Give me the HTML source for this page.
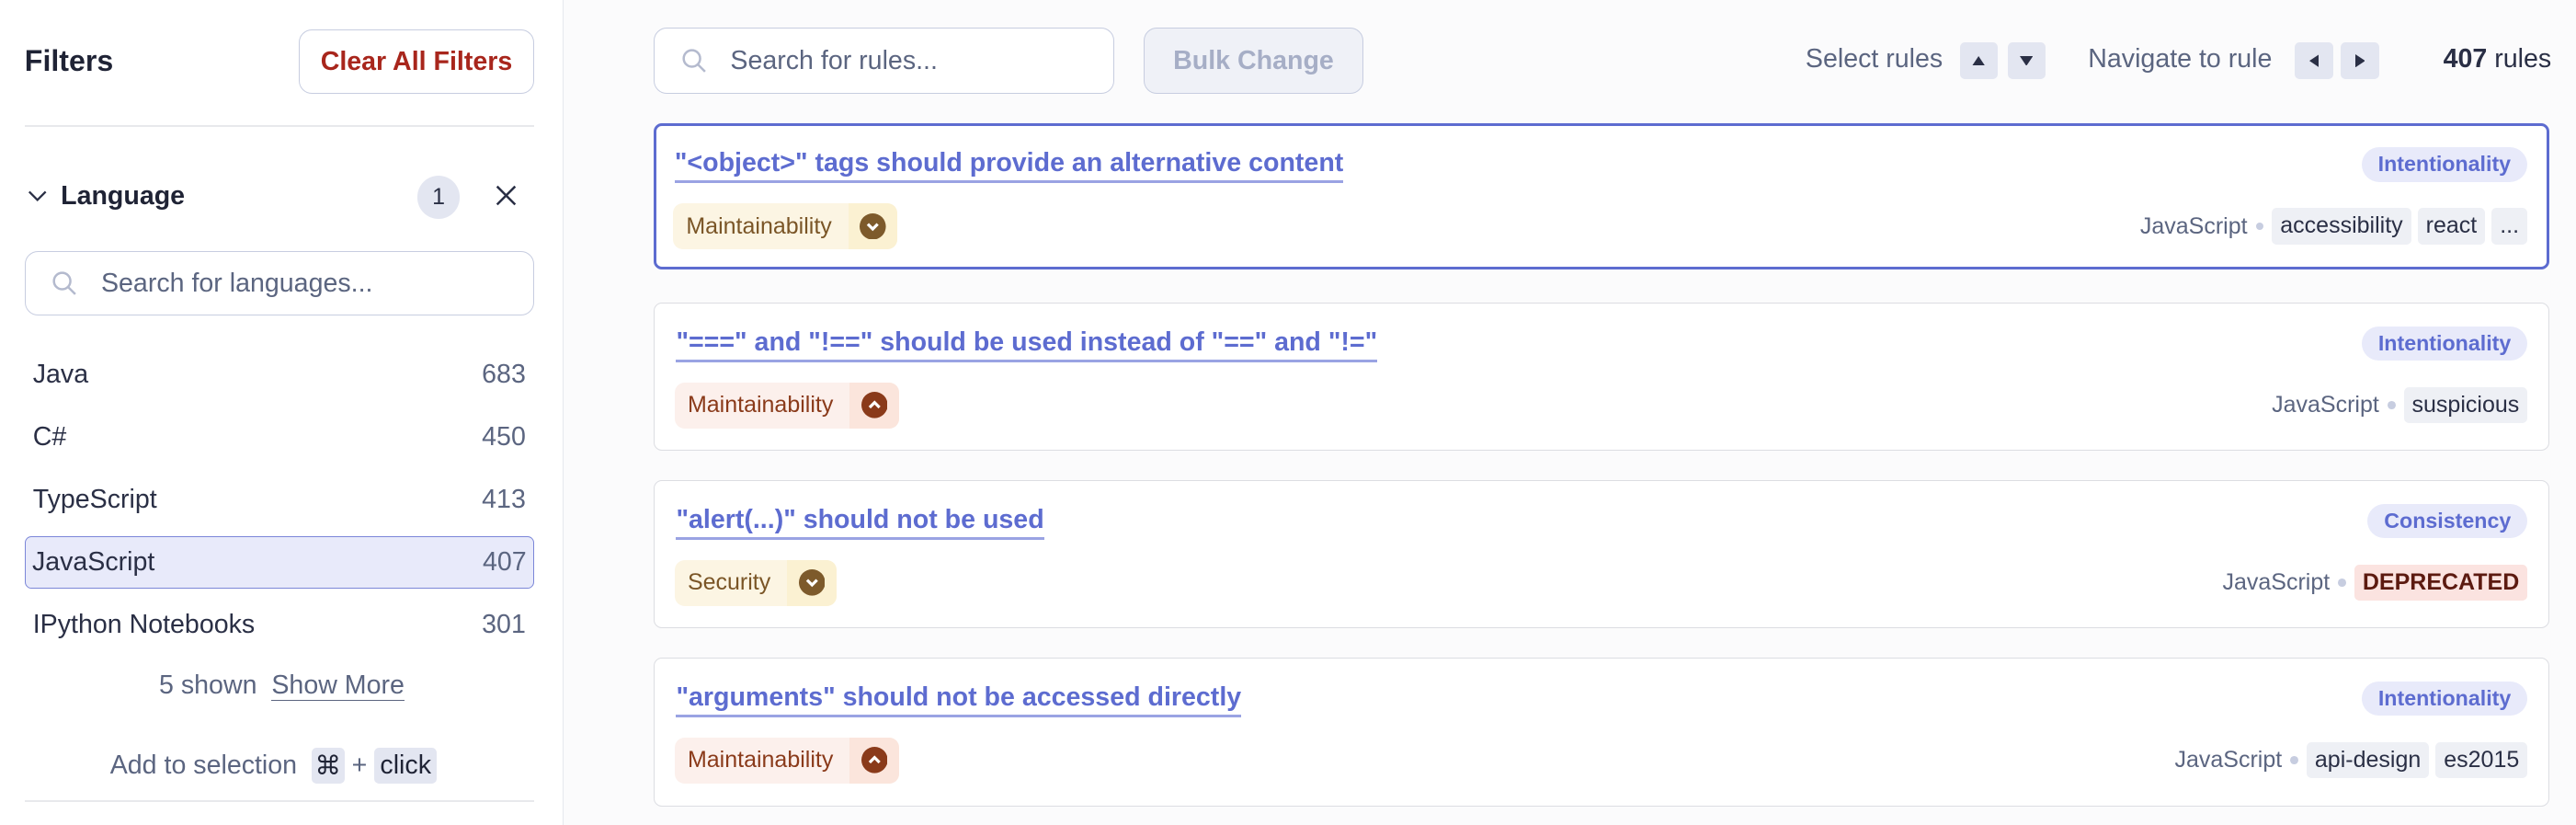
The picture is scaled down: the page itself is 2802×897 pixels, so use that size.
<!DOCTYPE html>
<html><head><meta charset="utf-8"><style>
*{box-sizing:border-box;margin:0;padding:0}
html,body{width:2802px;height:897px;overflow:hidden;background:#fbfbfc}
#z{zoom:1.787;width:1568px;height:502px;position:relative;font-family:"Liberation Sans",sans-serif;color:#2a2f45}
.a{position:absolute}
#side{left:0;top:0;width:343px;height:502px;background:#fff;border-right:1px solid #e6e8ee}
.btn{border:1px solid #c7cde0;border-radius:8px;display:flex;align-items:center;justify-content:center;font-weight:bold;font-size:16px}
.inp{border:1px solid #c7cde0;border-radius:8px;background:#fff;display:flex;align-items:center;font-size:16px;color:#5b6580}
.inp svg{margin:0 14px 0 16px}
.row{left:15px;width:310px;height:32px;display:flex;justify-content:space-between;align-items:center;padding:0 5px;font-size:16px}
.row span:last-child{color:#5b6580}
.card{left:398px;width:1154px;background:#fff;border:1px solid #dcdde2;border-radius:5px}
.title{left:13px;top:14px;font-size:16px;font-weight:bold;color:#5d6cd0;border-bottom:2px solid #9aa3e3;line-height:20px}
.pill{left:12px;top:48px;height:28px;border-radius:6px;display:flex;font-size:14px}
.pill .t{padding:0 10px 0 8px;display:flex;align-items:center}
.pill .i{width:30px;display:flex;align-items:center;justify-content:center;border-radius:0 6px 6px 0}
.med{background:#fcf5e3;color:#7a5526}.med .i{background:#fbf1d2}
.high{background:#fcf0ec;color:#8a3a1a}.high .i{background:#fbe5dc}
.attr{right:13px;top:14px;height:21px;border-radius:11px;background:#e8eafa;color:#5d6cd0;font-weight:bold;font-size:13px;padding:0 10px;line-height:21px}
.meta{right:13px;top:51px;display:flex;align-items:center;font-size:14px;color:#5b6580;height:22px}
.meta .d{width:5px;height:5px;border-radius:50%;background:#c7cde0;margin:0 5px}
.tag{background:#eef0f5;color:#2a2f45;padding:0 5px;height:22px;line-height:22px;border-radius:3px;margin-left:4px}
.kb{background:#e3e6f1;border-radius:3px;width:23px;height:22px;display:flex;align-items:center;justify-content:center}
</style></head><body><div id="z">
<div id="side" class="a">
<div class="a" style="left:15px;top:27px;font-size:18px;font-weight:bold;color:#1f2335">Filters</div>
<div class="a btn" style="left:182px;top:18px;width:143px;height:39px;color:#a8261c">Clear All Filters</div>
<div class="a" style="left:15px;top:76px;width:310px;height:1px;background:#e8e9ec"></div>
<svg class="a" style="left:17px;top:114px" width="12" height="10" viewBox="0 0 12 10"><path d="M1 2.5l5 5 5-5" fill="none" stroke="#2a2f45" stroke-width="1.3"/></svg>
<div class="a" style="left:37px;top:110px;font-size:16px;font-weight:bold;color:#1f2335">Language</div>
<div class="a" style="left:254px;top:107px;width:26px;height:26px;border-radius:13px;background:#e3e6f1;font-size:14px;display:flex;align-items:center;justify-content:center">1</div>
<svg class="a" style="left:301px;top:112px" width="14" height="14" viewBox="0 0 14 14"><path d="M1.5 1.5l11 11M12.5 1.5l-11 11" stroke="#2a2f45" stroke-width="1.4"/></svg>
<div class="a inp" style="left:15px;top:153px;width:310px;height:39px"><svg width="16" height="16" viewBox="0 0 16 16"><circle cx="6.5" cy="6.5" r="5" fill="none" stroke="#b4bace" stroke-width="1.4"/><path d="M10 10l4.5 4.5" stroke="#b4bace" stroke-width="1.4"/></svg>Search for languages...</div>
<div class="a row" style="top:212px"><span>Java</span><span>683</span></div>
<div class="a row" style="top:250px"><span>C#</span><span>450</span></div>
<div class="a row" style="top:288px"><span>TypeScript</span><span>413</span></div>
<div class="a row" style="top:326px;background:#e8eafa;border:1px solid #7b86d8;border-radius:4px;padding:0 4px"><span>JavaScript</span><span>407</span></div>
<div class="a row" style="top:364px"><span>IPython Notebooks</span><span>301</span></div>
<div class="a" style="left:0;width:343px;top:408px;text-align:center;font-size:16px;color:#5b6580">5 shown&nbsp;&nbsp;<span style="border-bottom:1px solid #5b6580">Show More</span></div>
<div class="a" style="left:67px;top:455px;display:flex;align-items:center;font-size:16px;color:#5b6580;height:22px">Add to selection&nbsp;&nbsp;<span class="kb" style="width:20px;color:#1f2335">⌘</span>&nbsp;+&nbsp;<span class="kb" style="width:38px;color:#1f2335">click</span></div>
<div class="a" style="left:15px;top:487px;width:310px;height:1px;background:#e8e9ec"></div>
</div>
<div class="a inp" style="left:398px;top:17px;width:280px;height:40px"><svg width="16" height="16" viewBox="0 0 16 16"><circle cx="6.5" cy="6.5" r="5" fill="none" stroke="#b4bace" stroke-width="1.4"/><path d="M10 10l4.5 4.5" stroke="#b4bace" stroke-width="1.4"/></svg>Search for rules...</div>
<div class="a btn" style="left:696px;top:17px;width:134px;height:40px;background:#eff1f7;color:#a6aec6">Bulk Change</div>
<div class="a" style="left:1099px;top:27px;font-size:16px;color:#5b6580">Select rules</div>
<div class="a kb" style="left:1193px;top:26px"><svg width="8" height="6"><path d="M0 6L4 0 8 6z" fill="#2a2f45"/></svg></div>
<div class="a kb" style="left:1222px;top:26px"><svg width="8" height="6"><path d="M0 0L4 6 8 0z" fill="#2a2f45"/></svg></div>
<div class="a" style="left:1271px;top:27px;font-size:16px;color:#5b6580">Navigate to rule</div>
<div class="a kb" style="left:1397px;top:26px"><svg width="6" height="8"><path d="M6 0L0 4 6 8z" fill="#2a2f45"/></svg></div>
<div class="a kb" style="left:1425px;top:26px"><svg width="6" height="8"><path d="M0 0L6 4 0 8z" fill="#2a2f45"/></svg></div>
<div class="a" style="right:15px;top:27px;font-size:16px;color:#2a2f45"><b>407</b> rules</div>

<div class="a card" style="top:75px;height:89px;border:2px solid #5d6cd0">
<div class="a title" style="left:11px;top:13px">"&lt;object&gt;" tags should provide an alternative content</div>
<div class="a pill med" style="left:10px;top:47px"><span class="t">Maintainability</span><span class="i"><svg width="16" height="16" viewBox="0 0 16 16"><circle cx="8" cy="8" r="8" fill="#7d5a2b"/><path d="M5 6.5l3 3 3-3" fill="none" stroke="#fff" stroke-width="1.8"/></svg></span></div>
<div class="a attr" style="right:12px;top:13px">Intentionality</div>
<div class="a meta" style="right:12px;top:50px">JavaScript<span class="d"></span><span class="tag" style="margin-left:0">accessibility</span><span class="tag">react</span><span class="tag">...</span></div>
</div>

<div class="a card" style="top:184px;height:90px">
<div class="a title">"===" and "!==" should be used instead of "==" and "!="</div>
<div class="a pill high"><span class="t">Maintainability</span><span class="i"><svg width="16" height="16" viewBox="0 0 16 16"><circle cx="8" cy="8" r="8" fill="#8a3a1a"/><path d="M5 9.5l3-3 3 3" fill="none" stroke="#fff" stroke-width="1.8"/></svg></span></div>
<div class="a attr">Intentionality</div>
<div class="a meta">JavaScript<span class="d"></span><span class="tag" style="margin-left:0">suspicious</span></div>
</div>

<div class="a card" style="top:292px;height:90px">
<div class="a title">"alert(...)" should not be used</div>
<div class="a pill med"><span class="t">Security</span><span class="i"><svg width="16" height="16" viewBox="0 0 16 16"><circle cx="8" cy="8" r="8" fill="#7d5a2b"/><path d="M5 6.5l3 3 3-3" fill="none" stroke="#fff" stroke-width="1.8"/></svg></span></div>
<div class="a attr">Consistency</div>
<div class="a meta">JavaScript<span class="d"></span><span class="tag" style="margin-left:0;background:#fbe3e0;color:#5c1a10;font-weight:bold">DEPRECATED</span></div>
</div>

<div class="a card" style="top:400px;height:91px">
<div class="a title">"arguments" should not be accessed directly</div>
<div class="a pill high"><span class="t">Maintainability</span><span class="i"><svg width="16" height="16" viewBox="0 0 16 16"><circle cx="8" cy="8" r="8" fill="#8a3a1a"/><path d="M5 9.5l3-3 3 3" fill="none" stroke="#fff" stroke-width="1.8"/></svg></span></div>
<div class="a attr">Intentionality</div>
<div class="a meta">JavaScript<span class="d"></span><span class="tag" style="margin-left:0">api-design</span><span class="tag">es2015</span></div>
</div>
</div></body></html>
